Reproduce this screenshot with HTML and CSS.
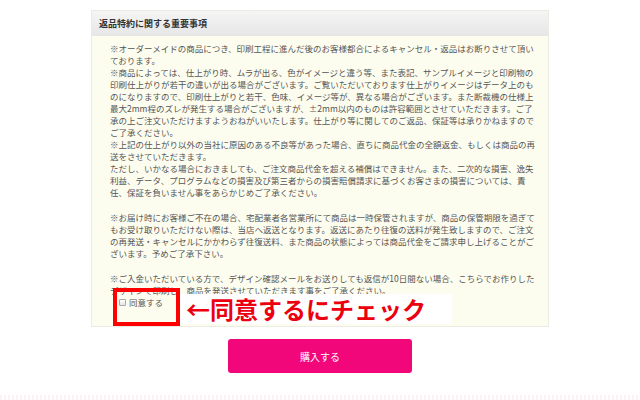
FILE: index.html
```html
<!DOCTYPE html>
<html lang="ja">
  <head>
    <meta charset="UTF-8" />
    <meta name="viewport" content="width=device-width, initial-scale=1.0" />
    <title>返品特約</title>
    <link rel="stylesheet" href="styles.css">
  </head>
  <body>
    <div class="page">
      <div class="notice">
        <div class="notice-head">返品特約に関する重要事項</div>

        <div class="notice-body">
          <p>
            ※オーダーメイドの商品につき、印刷工程に進んだ後のお客様都合によるキャンセル・返品はお断りさせて頂い<br>
            ております。<br>
            ※商品によっては、仕上がり時、ムラが出る、色がイメージと違う等、また表記、サンプルイメージと印刷物の<br>
            印刷仕上がりが若干の違いが出る場合がございます。ご覧いただいております仕上がりイメージはデータ上のも<br>
            のになりますので、印刷仕上がりと若干、色味、イメージ等が、異なる場合がございます。また断裁機の仕様上<br>
            最大2mm程のズレが発生する場合がございますが、±2mm以内のものは許容範囲とさせていただきます。ご了<br>
            承の上ご注文いただけますようおねがいいたします。仕上がり等に関してのご返品、保証等は承りかねますので<br>
            ご了承ください。<br>
            ※上記の仕上がり以外の当社に原因のある不良等があった場合、直ちに商品代金の全額返金、もしくは商品の再<br>
            送をさせていただきます。<br>
            ただし、いかなる場合におきましても、ご注文商品代金を超える補償はできません。また、二次的な損害、逸失<br>
            利益、データ、プログラムなどの損害及び第三者からの損害賠償請求に基づくお客さまの損害については、責<br>
            任、保証を負いません事をあらかじめご了承ください。
          </p>
          <p>
            ※お届け時にお客様ご不在の場合、宅配業者各営業所にて商品は一時保管されますが、商品の保管期限を過ぎて<br>
            もお受け取りいただけない際は、当店へ返送となります。返送にあたり往復の送料が発生致しますので、ご注文<br>
            の再発送・キャンセルにかかわらず往復送料、また商品の状態によっては商品代金をご請求申し上げることがご<br>
            ざいます。予めご了承下さい。
          </p>
          <p>
            ※ご入金いただいている方で、デザイン確認メールをお送りしても返信が10日間ない場合、こちらでお作りした<br>
            デザインで印刷し、商品を発送させていただきます事をご了承ください。
          </p>
          <label class="agree"><input type="checkbox"> 同意する</label>
        </div>

        <!-- annotation -->
        <div class="mark"></div>
        <div class="callout">←同意するにチェック</div>
      </div>

      <button class="buy">購入する</button>

      <div class="footer-line"></div>
    </div>
  </body>
</html>
```

FILE: styles.css
```css
body {
  margin: 0;
  background-color: #fff;
  font-family: "Noto Sans CJK JP", "Noto Sans", sans-serif;
  color: #555;
}

.page {
  padding-top: 10px;
}

.notice {
  position: relative;
  width: 458px;
  margin: 0 auto;
  border: 1px solid #ecece4;
  box-sizing: border-box;
}

.notice-head {
  height: 25px;
  line-height: 25px;
  padding-left: 7px;
  font-size: 9px;
  font-weight: bold;
  color: #333;
  background: linear-gradient(#f5f5f5, #e6e6e6);
}

.notice-body {
  background-color: #fdfdef;
  padding: 6px 10px 18px 18px;
  font-size: 8.5px;
  line-height: 12px;
}

.notice-body p {
  margin: 0 0 13px;
  white-space: nowrap;
}

.notice-body p:last-of-type {
  margin-bottom: 0;
}

.agree {
  display: flex;
  align-items: center;
  gap: 3px;
  height: 12px;
  padding-left: 9px;
  color: #555;
}

.agree input {
  appearance: none;
  width: 7px;
  height: 7px;
  margin: 0;
  border: 1px solid #aaa;
  border-radius: 1px;
  background: linear-gradient(#fff, #e4e4e4);
}

.mark {
  position: absolute;
  left: 21px;
  top: 277px;
  width: 59px;
  height: 30px;
  border: 4px solid #f00;
}

.callout {
  position: absolute;
  left: 88px;
  top: 283px;
  width: 266px;
  height: 30px;
  padding-left: 6px;
  background-color: #fff;
  color: #ec0010;
  font-size: 24px;
  font-weight: bold;
  line-height: 30px;
}

.buy {
  display: block;
  width: 184px;
  height: 34px;
  margin: 12px auto 0;
  border: none;
  border-radius: 3px;
  background-color: #f2077b;
  color: #fff;
  font-family: inherit;
  font-size: 10px;
  cursor: pointer;
}

.footer-line {
  margin-top: 22px;
  height: 6px;
  background: repeating-linear-gradient(90deg, #fef1f4 0 2px, #fff 2px 4px);
}
```
